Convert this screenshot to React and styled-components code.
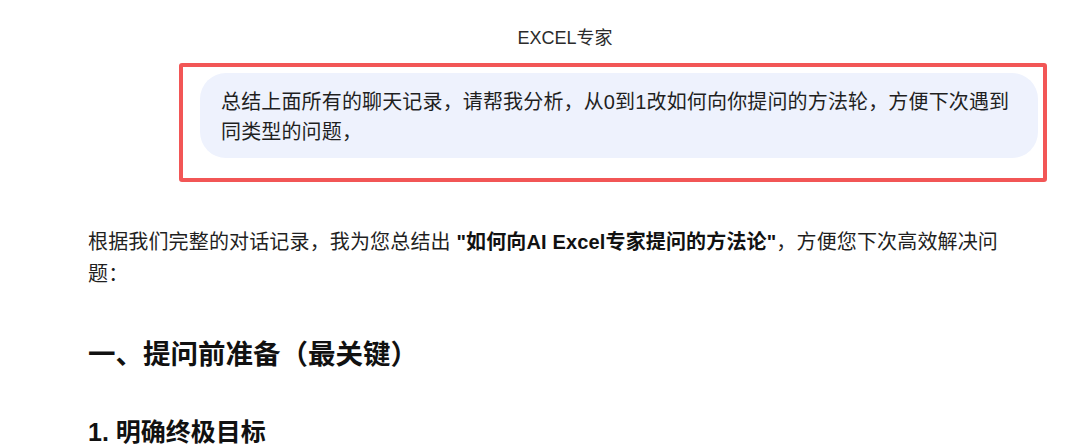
import React from "react";
import styled, { createGlobalStyle } from "styled-components";

const GlobalStyle = createGlobalStyle`
  html, body {
    margin: 0;
    padding: 0;
    background: #ffffff;
  }
  body {
    font-family: "Liberation Sans", "Noto Sans CJK SC", sans-serif;
    color: #1f1f1f;
  }
`;

const Page = styled.main`
  width: 959px;
  padding-left: 88px;
  overflow: hidden;
`;

const Title = styled.div`
  margin-top: 26px;
  text-align: center;
  font-size: 18px;
  line-height: 24px;
  color: #2b2b2b;
  padding-right: 5px;
`;

// red annotation frame around the user question
const Highlight = styled.div`
  box-sizing: border-box;
  width: 868px;
  height: 119px;
  margin: 13px 0 0 auto;
  border: 4px solid #f25656;
  border-radius: 3px;
  padding: 6px 5px 20px 17px;
`;

const Bubble = styled.div`
  background: #eef2fd;
  border-radius: 26px;
  padding: 14px 20px 11px 21px;
  font-size: 20px;
  line-height: 30px;
  letter-spacing: 0.15px;
  color: #1f1f1f;
`;

const Paragraph = styled.p`
  margin: 44px 0 0;
  font-size: 20px;
  line-height: 32px;
  letter-spacing: 0.15px;
  color: #1f1f1f;
  padding-right: 40px;
`;

const Strong = styled.strong`
  font-weight: 700;
  color: #111;
`;

const Heading = styled.h2`
  margin: 45px 0 0;
  font-size: 27.5px;
  line-height: 40px;
  font-weight: 700;
  color: #111;
`;

const SubHeading = styled.h3`
  margin: 40px 0 0;
  font-size: 25px;
  line-height: 34px;
  font-weight: 700;
  color: #111;
`;

export default function App() {
  return (
    <>
      <GlobalStyle />
      <Page>
        <Title>EXCEL专家</Title>
        <Highlight>
          <Bubble>
            总结上面所有的聊天记录，请帮我分析，从0到1改如何向你提问的方法轮，方便下次遇到同类型的问题，
          </Bubble>
        </Highlight>
        <Paragraph>
          根据我们完整的对话记录，我为您总结出 <Strong>"如何向AI Excel专家提问的方法论"</Strong>，方便您下次高效解决问题：
        </Paragraph>
        <Heading>一、提问前准备（最关键）</Heading>
        <SubHeading>1. 明确终极目标</SubHeading>
      </Page>
    </>
  );
}
